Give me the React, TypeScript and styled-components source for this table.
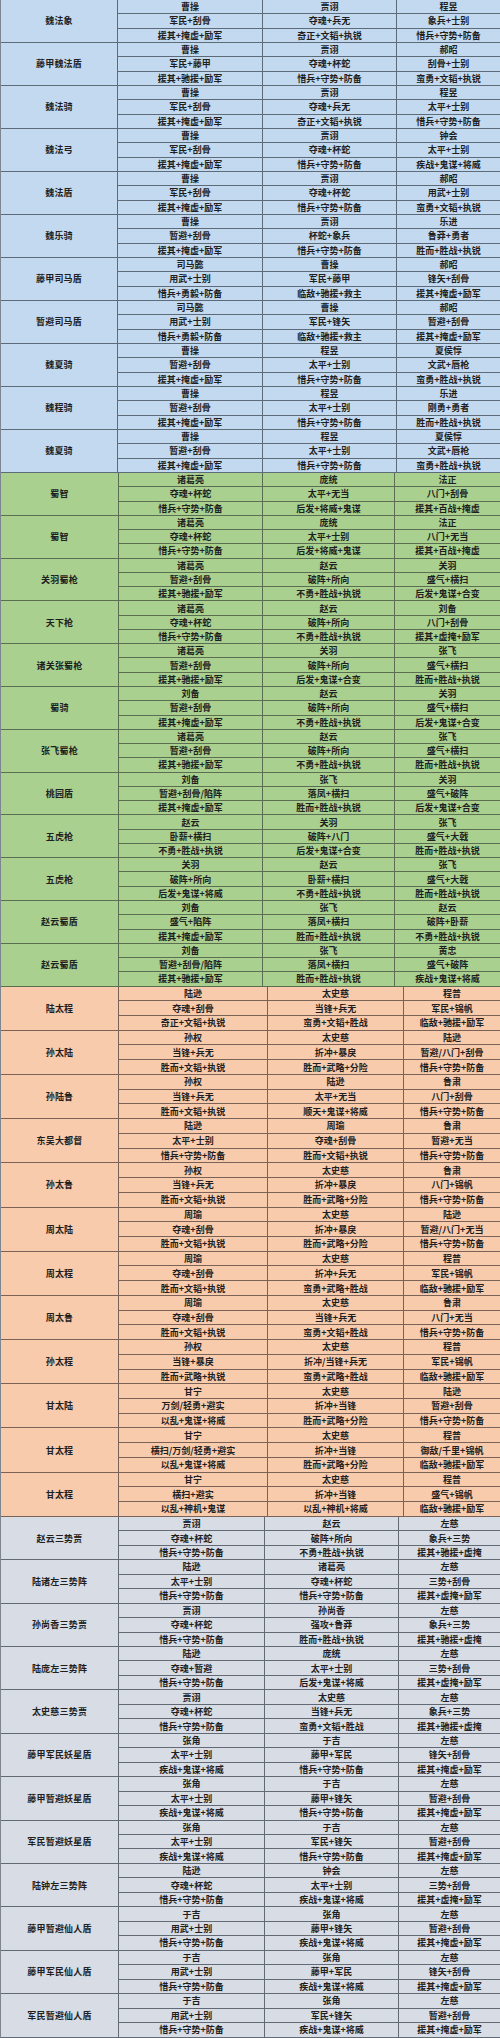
import styled, { createGlobalStyle } from "styled-components";

const GlobalStyle = createGlobalStyle`
  html, body {
    margin: 0;
    padding: 0;
    background: #ffffff;
  }
  body {
    font-family: "Noto Sans CJK SC", "Noto Sans", sans-serif;
  }
`;

type Camp = {
  key: string;
  bg: string;
  line: string;
  cols: string;
  height: number;
  groups: string[];
};

// each group: name ; row1 ; row2 ; row3, cells split by "|"
const camps: Camp[] = [
  {
    key: "wei",
    bg: "#c3d9ef",
    line: "#5d6b78",
    cols: "117px 145px 134px 1fr",
    height: 43,
    groups: [
      "魏法象;曹操|贾诩|程昱;军民+刮骨|夺魂+兵无|象兵+士别;援其+掩虚+励军|奇正+文韬+执锐|惜兵+守势+防备",
      "藤甲魏法盾;曹操|贾诩|郝昭;军民+藤甲|夺魂+杯蛇|刮骨+士别;援其+驰援+励军|惜兵+守势+防备|蛮勇+文韬+执锐",
      "魏法骑;曹操|贾诩|程昱;军民+刮骨|夺魂+兵无|太平+士别;援其+掩虚+励军|奇正+文韬+执锐|惜兵+守势+防备",
      "魏法弓;曹操|贾诩|钟会;军民+刮骨|夺魂+杯蛇|太平+士别;援其+掩虚+励军|惜兵+守势+防备|疾战+鬼谋+将威",
      "魏法盾;曹操|贾诩|郝昭;军民+刮骨|夺魂+杯蛇|用武+士别;援其+掩虚+励军|惜兵+守势+防备|蛮勇+文韬+执锐",
      "魏乐骑;曹操|贾诩|乐进;暂避+刮骨|杯蛇+象兵|鲁莽+勇者;援其+掩虚+励军|惜兵+守势+防备|胜而+胜战+执锐",
      "藤甲司马盾;司马懿|曹操|郝昭;用武+士别|军民+藤甲|锋矢+刮骨;惜兵+勇毅+防备|临敌+驰援+救主|援其+掩虚+励军",
      "暂避司马盾;司马懿|曹操|郝昭;用武+士别|军民+锋矢|暂避+刮骨;惜兵+勇毅+防备|临敌+驰援+救主|援其+掩虚+励军",
      "魏夏骑;曹操|程昱|夏侯惇;暂避+刮骨|太平+士别|文武+唇枪;援其+掩虚+励军|惜兵+守势+防备|蛮勇+胜战+执锐",
      "魏程骑;曹操|程昱|乐进;暂避+刮骨|太平+士别|刚勇+勇者;援其+掩虚+励军|惜兵+守势+防备|胜而+胜战+执锐",
      "魏夏骑;曹操|程昱|夏侯惇;暂避+刮骨|太平+士别|文武+唇枪;援其+掩虚+励军|惜兵+守势+防备|蛮勇+胜战+执锐",
    ],
  },
  {
    key: "shu",
    bg: "#a9d08e",
    line: "#5b6e52",
    cols: "118px 144px 132px 1fr",
    height: 42.8,
    groups: [
      "蜀智;诸葛亮|庞统|法正;夺魂+杯蛇|太平+无当|八门+刮骨;惜兵+守势+防备|后发+将威+鬼谋|援其+百战+掩虚",
      "蜀智;诸葛亮|庞统|法正;夺魂+杯蛇|太平+士别|八门+无当;惜兵+守势+防备|后发+将威+鬼谋|援其+百战+掩虚",
      "关羽蜀枪;诸葛亮|赵云|关羽;暂避+刮骨|破阵+所向|盛气+横扫;援其+驰援+励军|不勇+胜战+执锐|后发+鬼谋+合变",
      "天下枪;诸葛亮|赵云|刘备;夺魂+杯蛇|破阵+所向|八门+刮骨;惜兵+守势+防备|不勇+胜战+执锐|援其+虚掩+励军",
      "诸关张蜀枪;诸葛亮|关羽|张飞;暂避+刮骨|破阵+所向|盛气+横扫;援其+驰援+励军|后发+鬼谋+合变|胜而+胜战+执锐",
      "蜀骑;刘备|赵云|关羽;暂避+刮骨|破阵+所向|盛气+横扫;援其+掩虚+励军|不勇+胜战+执锐|后发+鬼谋+合变",
      "张飞蜀枪;诸葛亮|赵云|张飞;暂避+刮骨|破阵+所向|盛气+横扫;援其+驰援+励军|不勇+胜战+执锐|胜而+胜战+执锐",
      "桃园盾;刘备|张飞|关羽;暂避+刮骨/陷阵|落凤+横扫|盛气+破阵;援其+掩虚+励军|胜而+胜战+执锐|后发+鬼谋+合变",
      "五虎枪;赵云|关羽|张飞;卧薪+横扫|破阵+八门|盛气+大戟;不勇+胜战+执锐|后发+鬼谋+合变|胜而+胜战+执锐",
      "五虎枪;关羽|赵云|张飞;破阵+所向|卧薪+横扫|盛气+大戟;后发+鬼谋+将威|不勇+胜战+执锐|胜而+胜战+执锐",
      "赵云蜀盾;刘备|张飞|赵云;盛气+陷阵|落凤+横扫|破阵+卧薪;援其+掩虚+励军|胜而+胜战+执锐|不勇+胜战+执锐",
      "赵云蜀盾;刘备|张飞|黄忠;暂避+刮骨/陷阵|落凤+横扫|盛气+破阵;援其+驰援+励军|胜而+胜战+执锐|疾战+鬼谋+将威",
    ],
  },
  {
    key: "wu",
    bg: "#f8cbad",
    line: "#7a6256",
    cols: "118px 149px 136px 1fr",
    height: 44.2,
    groups: [
      "陆太程;陆逊|太史慈|程普;夺魂+刮骨|当锋+兵无|军民+锦帆;奇正+文韬+执锐|蛮勇+文韬+胜战|临敌+驰援+励军",
      "孙太陆;孙权|太史慈|陆逊;当锋+兵无|折冲+暴戾|暂避/八门+刮骨;胜而+文韬+执锐|胜而+武略+分险|惜兵+守势+防备",
      "孙陆鲁;孙权|陆逊|鲁肃;当锋+兵无|太平+无当|八门+刮骨;胜而+文韬+执锐|顺天+鬼谋+将威|惜兵+守势+防备",
      "东吴大都督;陆逊|周瑜|鲁肃;太平+士别|夺魂+刮骨|暂避+无当;惜兵+守势+防备|胜而+文韬+执锐|惜兵+守势+防备",
      "孙太鲁;孙权|太史慈|鲁肃;当锋+兵无|折冲+暴戾|八门+锦帆;胜而+文韬+执锐|胜而+武略+分险|惜兵+守势+防备",
      "周太陆;周瑜|太史慈|陆逊;夺魂+刮骨|折冲+暴戾|暂避/八门+无当;胜而+文韬+执锐|胜而+武略+分险|惜兵+守势+防备",
      "周太程;周瑜|太史慈|程普;夺魂+刮骨|折冲+兵无|军民+锦帆;胜而+文韬+执锐|蛮勇+武略+胜战|临敌+驰援+励军",
      "周太鲁;周瑜|太史慈|鲁肃;夺魂+刮骨|当锋+兵无|八门+无当;胜而+文韬+执锐|蛮勇+文韬+胜战|惜兵+守势+防备",
      "孙太程;孙权|太史慈|程普;当锋+暴戾|折冲/当锋+兵无|军民+锦帆;胜而+武略+执锐|蛮勇+武略+胜战|临敌+驰援+励军",
      "甘太陆;甘宁|太史慈|陆逊;万剑/轻勇+避实|折冲+当锋|暂避+刮骨;以乱+鬼谋+将威|胜而+武略+分险|惜兵+守势+防备",
      "甘太程;甘宁|太史慈|程普;横扫/万剑/轻勇+避实|折冲+当锋|御敌/千里+锦帆;以乱+鬼谋+将威|胜而+武略+分险|临敌+驰援+励军",
      "甘太程;甘宁|太史慈|程普;横扫+避实|折冲+当锋|盛气+锦帆;以乱+神机+鬼谋|以乱+神机+将威|临敌+驰援+励军",
    ],
  },
  {
    key: "qun",
    bg: "#d7dce5",
    line: "#626a75",
    cols: "118px 146px 134px 1fr",
    height: 43.4,
    groups: [
      "赵云三势贾;贾诩|赵云|左慈;夺魂+杯蛇|破阵+所向|象兵+三势;惜兵+守势+防备|不勇+胜战+执锐|援其+驰援+虚掩",
      "陆诸左三势阵;陆逊|诸葛亮|左慈;太平+士别|夺魂+杯蛇|三势+刮骨;惜兵+守势+防备|惜兵+守势+防备|援其+虚掩+励军",
      "孙尚香三势贾;贾诩|孙尚香|左慈;夺魂+杯蛇|强攻+鲁莽|象兵+三势;惜兵+守势+防备|胜而+胜战+执锐|援其+驰援+虚掩",
      "陆庞左三势阵;陆逊|庞统|左慈;夺魂+暂避|太平+士别|三势+刮骨;惜兵+守势+防备|后发+鬼谋+将威|援其+虚掩+励军",
      "太史慈三势贾;贾诩|太史慈|左慈;夺魂+杯蛇|当锋+兵无|象兵+三势;惜兵+守势+防备|蛮勇+文韬+胜战|援其+驰援+虚掩",
      "藤甲军民妖星盾;张角|于吉|左慈;太平+士别|藤甲+军民|锋矢+刮骨;疾战+鬼谋+将威|惜兵+守势+防备|援其+掩虚+励军",
      "藤甲暂避妖星盾;张角|于吉|左慈;太平+士别|藤甲+锋矢|暂避+刮骨;疾战+鬼谋+将威|惜兵+守势+防备|援其+掩虚+励军",
      "军民暂避妖星盾;张角|于吉|左慈;太平+士别|军民+锋矢|暂避+刮骨;疾战+鬼谋+将威|惜兵+守势+防备|援其+掩虚+励军",
      "陆钟左三势阵;陆逊|钟会|左慈;夺魂+杯蛇|太平+士别|三势+刮骨;惜兵+守势+防备|疾战+鬼谋+将威|援其+虚掩+励军",
      "藤甲暂避仙人盾;于吉|张角|左慈;用武+士别|藤甲+锋矢|暂避+刮骨;惜兵+守势+防备|疾战+鬼谋+将威|援其+掩虚+励军",
      "藤甲军民仙人盾;于吉|张角|左慈;用武+士别|藤甲+军民|锋矢+刮骨;惜兵+守势+防备|疾战+鬼谋+将威|援其+掩虚+励军",
      "军民暂避仙人盾;于吉|张角|左慈;用武+士别|军民+锋矢|暂避+刮骨;惜兵+守势+防备|疾战+鬼谋+将威|援其+掩虚+励军",
    ],
  },
];

const Sheet = styled.div`
  width: 500px;
  display: flex;
  flex-direction: column;
  border-left: 1px solid #7d8690;
  box-sizing: border-box;
  color: #1f1f1f;
`;

const Section = styled.section<{ $bg: string; $line: string }>`
  display: flex;
  flex-direction: column;
  background: ${(p) => p.$bg};
  --line: ${(p) => p.$line};
`;

const Group = styled.div<{ $cols: string; $h: number }>`
  display: grid;
  grid-template-columns: ${(p) => p.$cols};
  grid-template-rows: repeat(3, 1fr);
  height: ${(p) => p.$h}px;
`;

const NameCell = styled.div`
  grid-row: 1 / span 3;
  display: flex;
  align-items: center;
  justify-content: center;
  font-size: 9px;
  font-weight: 700;
  letter-spacing: 0.2px;
  border-right: 1px solid var(--line);
  border-bottom: 1px solid var(--line);
`;

const Cell = styled.div<{ $last: boolean }>`
  display: flex;
  align-items: center;
  justify-content: center;
  font-size: 9px;
  font-weight: 700;
  line-height: 1;
  white-space: nowrap;
  overflow: hidden;
  border-bottom: 1px solid var(--line);
  border-right: ${(p) => (p.$last ? "none" : "1px solid var(--line)")};
`;

export default function App() {
  return (
    <>
      <GlobalStyle />
      <Sheet>
        {camps.map((camp) => (
          <Section key={camp.key} $bg={camp.bg} $line={camp.line}>
            {camp.groups.map((g, gi) => {
              const [name, ...rows] = g.split(";");
              return (
                <Group key={gi} $cols={camp.cols} $h={camp.height}>
                  <NameCell>{name}</NameCell>
                  {rows.map((r, ri) =>
                    r.split("|").map((c, ci) => (
                      <Cell key={`${ri}-${ci}`} $last={ci === 2}>
                        {c}
                      </Cell>
                    ))
                  )}
                </Group>
              );
            })}
          </Section>
        ))}
      </Sheet>
    </>
  );
}
